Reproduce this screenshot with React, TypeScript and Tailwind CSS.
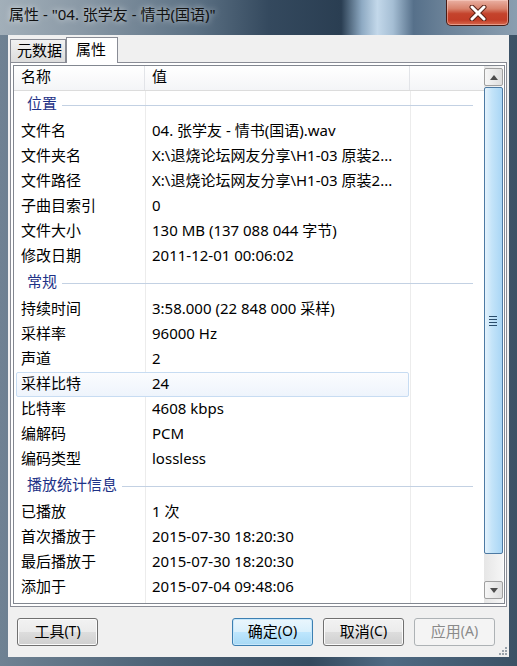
type Row = { k: string; v: string; sel?: boolean }
type Group = { title: string; rows: Row[] }

const groups: Group[] = [
  {
    title: '位置',
    rows: [
      { k: '文件名', v: '04. 张学友 - 情书(国语).wav' },
      { k: '文件夹名', v: 'X:\\退烧论坛网友分享\\H1-03 原装2...' },
      { k: '文件路径', v: 'X:\\退烧论坛网友分享\\H1-03 原装2...' },
      { k: '子曲目索引', v: '0' },
      { k: '文件大小', v: '130 MB (137 088 044 字节)' },
      { k: '修改日期', v: '2011-12-01 00:06:02' },
    ],
  },
  {
    title: '常规',
    rows: [
      { k: '持续时间', v: '3:58.000 (22 848 000 采样)' },
      { k: '采样率', v: '96000 Hz' },
      { k: '声道', v: '2' },
      { k: '采样比特', v: '24', sel: true },
      { k: '比特率', v: '4608 kbps' },
      { k: '编解码', v: 'PCM' },
      { k: '编码类型', v: 'lossless' },
    ],
  },
  {
    title: '播放统计信息',
    rows: [
      { k: '已播放', v: '1 次' },
      { k: '首次播放于', v: '2015-07-30 18:20:30' },
      { k: '最后播放于', v: '2015-07-30 18:20:30' },
      { k: '添加于', v: '2015-07-04 09:48:06' },
    ],
  },
]

function CloseButton() {
  return (
    <div className="w-[63px] h-[26px] mr-[8px] rounded-b-[5px] border border-t-0 border-[#4a1c14] bg-[linear-gradient(180deg,#eab1a3_0%,#d8826c_35%,#c4432c_55%,#c23d27_80%,#d86a4f_100%)] shadow-[inset_0_0_0_1px_rgba(255,220,210,0.45)] flex items-center justify-center">
      <svg width="18" height="16" viewBox="0 0 18 16">
        <path d="M3 2 L15 14 M15 2 L3 14" stroke="#5a2318" strokeWidth="5" strokeLinecap="round" />
        <path d="M3 2 L15 14 M15 2 L3 14" stroke="#ffffff" strokeWidth="3" strokeLinecap="round" />
      </svg>
    </div>
  )
}

function ArrowButton({ up }: { up?: boolean }) {
  return (
    <div className="h-[18px] rounded-[2px] border border-[#a0a0a0] bg-[linear-gradient(90deg,#f6f6f6,#dedede)] flex items-center justify-center">
      <svg width="8" height="5" viewBox="0 0 8 5">
        {up ? <path d="M0 5 L4 0 L8 5 Z" fill="#4d4d4d" /> : <path d="M0 0 L4 5 L8 0 Z" fill="#4d4d4d" />}
      </svg>
    </div>
  )
}

function Scrollbar() {
  return (
    <div className="w-[19px] mr-px flex flex-col pt-[2px] pb-[4px] bg-[linear-gradient(90deg,#e6e6e6,#f6f6f6)]">
      <ArrowButton up />
      <div className="h-[467px] mt-px rounded-[2px] border border-[#4d7aa3] bg-[linear-gradient(90deg,#e4f2fc_0%,#c4e4f9_40%,#a9d6f5_100%)] flex items-center justify-center">
        <svg width="9" height="12" viewBox="0 0 9 12">
          <path d="M0 1.5 H8 M0 4.5 H8 M0 7.5 H8 M0 10.5 H8" stroke="#2a4d6b" strokeWidth="1" />
        </svg>
      </div>
      <div className="flex-1" />
      <ArrowButton />
    </div>
  )
}

function Btn({ label, hot, def, disabled }: { label: string; hot: string; def?: boolean; disabled?: boolean }) {
  const cls = disabled
    ? 'border-[#adb2b5] bg-[#f4f4f4] text-[#8a8a8a]'
    : def
      ? 'border-[#3c7fb1] bg-[linear-gradient(180deg,#eaf6fd_0%,#d9f0fc_50%,#bee6fd_51%,#a7d9f5_100%)] text-black shadow-[inset_0_0_0_1px_#c6e7fb]'
      : 'border-[#707070] bg-[linear-gradient(180deg,#f2f2f2_0%,#ebebeb_50%,#dddddd_51%,#cfcfcf_100%)] text-black shadow-[inset_0_0_0_1px_#fbfbfb]'
  return (
    <div className={`w-[81px] h-[28px] pb-[2px] rounded-[3px] border flex items-center justify-center text-[15px] leading-none ${cls}`}>
      {label}
      <span className="text-[14px]">({hot})</span>
    </div>
  )
}

export default function App() {
  return (
    <div className="w-[517px] h-[666px] flex flex-col bg-[linear-gradient(90deg,#6f8293_0%,#4d6377_30%,#34495d_60%,#4f6a83_75%,#3b5165_100%)] font-['Noto_Sans','Noto_Sans_CJK_SC',sans-serif] overflow-hidden">
      {/* title bar */}
      <div className="h-[35px] flex items-start justify-between bg-[linear-gradient(90deg,#a2afb9_0%,#8b9aa7_15%,#5c7184_38%,#34495e_52%,#2a3e52_66%,#8eaac3_70%,#c3d8ea_73%,#a5bed4_76%,#56708a_80%,#6b8298_86%,#8a9eb0_100%)]">
        <div className="pl-[9px] pt-[7px] text-[15px] leading-none text-[#111] [text-shadow:0_0_6px_rgba(255,255,255,0.8)]">
          属性 - "04. 张学友 - 情书(国语)"
        </div>
        <CloseButton />
      </div>

      <div className="flex-1 px-[8px] pb-[9px] flex">
        <div className="flex-1 bg-[#f0f0f0] flex flex-col">
          {/* tabs */}
          <div className="h-[27px] flex items-end pl-[2px]">
            <div className="w-[56px] h-[23px] pb-[2px] border border-b-0 border-[#898c95] bg-[linear-gradient(180deg,#f2f2f2,#dcdcdc)] flex items-center pl-[6px] text-[15px] leading-none">
              元数据
            </div>
            <div className="relative z-10 w-[52px] h-[26px] pb-[3px] -mb-px border border-b-0 border-[#898c95] bg-white flex items-center pl-[9px] text-[15px] leading-none">
              属性
            </div>
          </div>

          {/* tab panel */}
          <div className="mx-[2px] h-[545px] border border-[#898c95] bg-white p-[2px] pr-px">
            <div className="h-full border border-[#828790] flex">
              <div className="relative flex-1 overflow-hidden">
                <div className="absolute top-0 bottom-0 left-[131px] w-px bg-[#ececec]" />
                <div className="absolute top-0 bottom-0 left-[396px] w-px bg-[#ececec]" />
                {/* header */}
                <div className="relative h-[25px] flex items-center border-b border-[#dcdcdc] bg-[linear-gradient(180deg,#ffffff,#f4f5f7)] text-[15px] leading-none">
                  <div className="w-[131px] h-full pl-[7px] pb-[3px] flex items-center border-r border-[#e2e4e8]">名称</div>
                  <div className="w-[265px] h-full pl-[7px] pb-[3px] flex items-center border-r border-[#e2e4e8]">值</div>
                </div>
                {groups.map((g) => (
                  <div key={g.title} className="relative">
                    <div className="h-[28px] flex items-center pl-[13px] pr-[11px] text-[15px] leading-none text-[#1e3287]">
                      <span className="-translate-y-[2px]">{g.title}</span>
                      <div className="flex-1 h-px ml-[5px] bg-[#c3d1e3]" />
                    </div>
                    {g.rows.map((r) =>
                      r.sel ? (
                        <div key={r.k} className="h-[25px] pl-[2px] flex">
                          <div className="w-[393px] h-full pb-[2px] rounded-[2px] border border-[#c7dcf2] bg-[linear-gradient(180deg,#fbfcfe,#eef4fc)] flex items-center text-[15px] leading-none">
                            <div className="w-[128px] pl-[4px]">{r.k}</div>
                            <div className="pl-[7px]">{r.v}</div>
                          </div>
                        </div>
                      ) : (
                        <div key={r.k} className="h-[25px] pb-[3px] flex items-center text-[15px] leading-none text-black">
                          <div className="w-[131px] pl-[7px]">{r.k}</div>
                          <div className="pl-[7px] whitespace-nowrap">{r.v}</div>
                        </div>
                      ),
                    )}
                  </div>
                ))}
              </div>
              <Scrollbar />
            </div>
          </div>

          {/* buttons */}
          <div className="flex-1 flex items-start pt-[11px] pl-[9px] pr-[14px] relative">
            <Btn label="工具" hot="T" />
            <div className="flex-1" />
            <div className="flex gap-[10px]">
              <Btn label="确定" hot="O" def />
              <Btn label="取消" hot="C" />
              <Btn label="应用" hot="A" disabled />
            </div>
            <svg className="absolute right-[2px] bottom-[2px]" width="10" height="10" viewBox="0 0 10 10">
              {[
                [8, 2],
                [8, 5],
                [5, 5],
                [8, 8],
                [5, 8],
                [2, 8],
              ].map(([x, y]) => (
                <rect key={`${x}-${y}`} x={x} y={y} width="2" height="2" fill="#9aa3ab" />
              ))}
            </svg>
          </div>
        </div>
      </div>
    </div>
  )
}
